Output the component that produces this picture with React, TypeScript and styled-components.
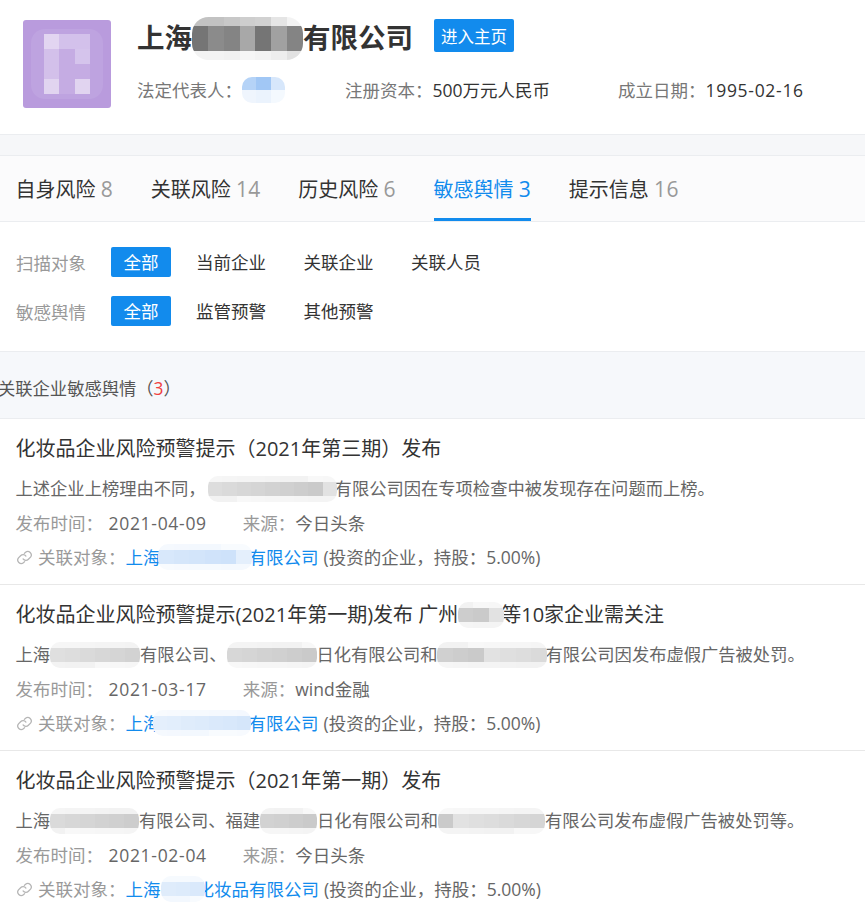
import React from "react";
import styled, { createGlobalStyle } from "styled-components";

const Global = createGlobalStyle`
  html, body { margin: 0; padding: 0; background: #fff; }
  body { font-family: "Open Sans", "Noto Sans CJK SC", sans-serif; color: #333; overflow: hidden; }
`;

const Page = styled.div`
  width: 865px;
  height: 922px;
  overflow: hidden;
  background: #fff;
`;

const Header = styled.header`
  display: flex;
  padding: 20px 0 0 23px;
  height: 114px;
  border-bottom: 1px solid #ebedf0;
`;

const Avatar = styled.div`
  width: 88px;
  height: 88px;
  border-radius: 3px;
  flex: none;
  overflow: hidden;
  svg { display: block; }
`;

const HeadInfo = styled.div`
  margin-left: 26px;
  display: flex;
  flex-direction: column;
`;

const TitleRow = styled.div`
  display: flex;
  align-items: flex-start;
`;

const CompanyName = styled.h1`
  margin: 0;
  height: 36px;
  font-size: 27.5px;
  line-height: 36px;
  font-weight: 700;
  color: #333;
  display: flex;
  align-items: center;
`;

const HomeButton = styled.button`
  margin: -1px 0 0 21px;
  width: 80px;
  height: 33px;
  border: 0;
  padding: 0;
  border-radius: 2px;
  background: #128bed;
  color: #fff;
  font: 16.5px "Noto Sans CJK SC", sans-serif;
`;

const MetaRow = styled.div`
  display: flex;
  margin-top: 21px;
  font-size: 17.5px;
  line-height: 24px;
`;

const MetaCell = styled.div<{ $w: number }>`
  width: ${(p) => p.$w}px;
  display: flex;
  align-items: center;
  white-space: nowrap;
`;

const MetaLabel = styled.span`
  color: #777;
`;

const Wide = styled.span`
  letter-spacing: 0.7px;
`;

const Gap = styled.div`
  height: 20px;
  background: #f6f7f9;
`;

const Tabs = styled.nav`
  height: 65px;
  display: flex;
  padding-left: 15.5px;
  gap: 37.6px;
  background: #fbfbfc;
  border-top: 1px solid #ebedf0;
  border-bottom: 1px solid #ebedf0;
`;

const Tab = styled.div<{ $active?: boolean }>`
  height: 65px;
  line-height: 67px;
  font-size: 20px;
  white-space: nowrap;
  color: ${(p) => (p.$active ? "#128bed" : "#333")};
  box-shadow: ${(p) => (p.$active ? "inset 0 -3px 0 #128bed" : "none")};
`;

const TabCount = styled.span<{ $active?: boolean }>`
  font-size: 21px;
  letter-spacing: 0.4px;
  color: ${(p) => (p.$active ? "#128bed" : "#999")};
`;

const Filters = styled.section`
  height: 129px;
  padding: 25px 0 0 16px;
  box-sizing: border-box;
  display: flex;
  flex-direction: column;
  gap: 19px;
`;

const FilterRow = styled.div`
  display: flex;
  align-items: center;
  height: 30px;
`;

const FilterLabel = styled.span`
  width: 95px;
  font-size: 17.5px;
  color: #999;
`;

const Chips = styled.div`
  display: flex;
  gap: 12.5px;
`;

const Chip = styled.span<{ $active?: boolean }>`
  height: 30px;
  line-height: 30px;
  padding: 0 12.5px;
  border-radius: 2px;
  font-size: 17.5px;
  background: ${(p) => (p.$active ? "#128bed" : "transparent")};
  color: ${(p) => (p.$active ? "#fff" : "#333")};
`;

const SectionHead = styled.div`
  height: 66px;
  line-height: 74px;
  border-top: 1px solid #ebedf0;
  border-bottom: 1px solid #ebedf0;
  background: #f6f8fb;
  font-size: 17.3px;
  color: #555;
  white-space: nowrap;
`;

const SectionText = styled.span`
  display: inline-block;
  transform: translateX(-2px);
`;

const Red = styled.span`
  color: #f04040;
`;

const Item = styled.article`
  height: 165px;
  padding-left: 15.5px;
  border-bottom: 1px solid #e8e8e8;
  display: flex;
  flex-direction: column;
  white-space: nowrap;
  &:last-child { border-bottom: 0; }
`;

const ItemTitle = styled.h2`
  margin: 15px 0 0;
  font-size: 20px;
  line-height: 30px;
  font-weight: 400;
  color: #333;
  display: flex;
  align-items: center;
`;

const ItemDesc = styled.p`
  margin: 12px 0 0;
  font-size: 17.3px;
  line-height: 26px;
  color: #666;
  display: flex;
  align-items: center;
`;

const ItemMeta = styled.div`
  margin-top: 8px;
  font-size: 17.5px;
  line-height: 26px;
  color: #999;
  display: flex;
`;

const MetaValue = styled.span<{ $gap: number; $left: number }>`
  margin-left: ${(p) => p.$left}px;
  margin-right: ${(p) => p.$gap}px;
  color: #666;
`;

const ItemLink = styled.div`
  margin-top: 8px;
  font-size: 17.5px;
  line-height: 26px;
  color: #999;
  display: flex;
  align-items: center;
`;

const LinkIcon = styled.svg`
  width: 17px;
  height: 17px;
  margin-right: 5.5px;
  flex: none;
`;

const CompanyLink = styled.span`
  color: #128bed;
  display: flex;
  align-items: center;
`;

const LinkNote = styled.span`
  color: #666;
  margin-left: 5px;
`;

const MosaicBox = styled.span<{ $w: number; $h: number; $ml: number; $mr: number }>`
  display: inline-block;
  position: relative;
  flex: none;
  width: ${(p) => p.$w}px;
  height: ${(p) => p.$h}px;
  margin: 0 ${(p) => p.$mr}px 0 ${(p) => p.$ml}px;
  border-radius: ${(p) => p.$h / 2.6}px;
  overflow: hidden;
  filter: blur(0.5px);
  svg { display: block; }
`;

/* Pixelated privacy blur: a soft blob with a grid of tinted cells. */
function Mosaic({
  w,
  h = 26,
  rgb,
  levels,
  ml = 0,
  mr = 0,
}: {
  w: number;
  h?: number;
  rgb: number[];
  levels: number[][];
  ml?: number;
  mr?: number;
}) {
  const rows = levels.length;
  const mix = (v: number) =>
    `rgb(${rgb.map((c) => Math.round(255 - v * (255 - c))).join(",")})`;
  const edges = rows === 3 ? [0, Math.round(h * 0.22), Math.round(h * 0.78), h] : levels.map((_, r) => Math.round((r * h) / rows)).concat(h);
  return (
    <MosaicBox $w={w} $h={h} $ml={ml} $mr={mr}>
      <svg width={w} height={h} viewBox={`0 0 ${w} ${h}`} shapeRendering="crispEdges">
        {levels.map((row, r) =>
          row.map((v, c) => {
            const x0 = Math.round((c * w) / row.length);
            const x1 = Math.round(((c + 1) * w) / row.length);
            return (
              <rect
                key={`${r}-${c}`}
                x={x0}
                y={edges[r]}
                width={x1 - x0}
                height={edges[r + 1] - edges[r]}
                fill={mix(v)}
              />
            );
          })
        )}
      </svg>
    </MosaicBox>
  );
}

const GREY = [110, 110, 110];
const BLUE = [120, 175, 240];
const soft = (n: number, seed: number) =>
  Array.from({ length: n }, (_, i) => 0.2 + (((i * 7 + seed) * 13) % 10) / 55);
const band = (n: number, s: number) => [
  soft(n, s).map((v) => v * 0.25),
  soft(n, s + 3),
  soft(n, s + 5).map((v) => v * 0.25),
];

const LinkGlyph = () => (
  <LinkIcon viewBox="0 0 24 24" fill="none" stroke="#b5b5b5" strokeWidth="1.8" strokeLinecap="round">
    <path d="M10 14a5 5 0 0 0 7.5.5l3-3a5 5 0 0 0-7-7l-1.7 1.7" />
    <path d="M14 10a5 5 0 0 0-7.5-.5l-3 3a5 5 0 0 0 7 7l1.7-1.7" />
  </LinkIcon>
);

type Seg = string | { w: number; seed: number; n?: number; ml?: number; mr?: number };

const Segs = ({ parts, rgb = GREY, h = 26 }: { parts: Seg[]; rgb?: number[]; h?: number }) => (
  <>
    {parts.map((p, i) =>
      typeof p === "string" ? (
        <span key={i}>{p}</span>
      ) : (
        <Mosaic
          key={i}
          w={p.w}
          h={h}
          rgb={rgb}
          ml={p.ml}
          mr={p.mr}
          levels={band(p.n ?? Math.round(p.w / 15), p.seed)}
        />
      )
    )}
  </>
);

const items: {
  title: Seg[];
  desc: Seg[];
  date: string;
  source: string;
  link: Seg[];
}[] = [
  {
    title: ["化妆品企业风险预警提示（2021年第三期）发布"],
    desc: ["上述企业上榜理由不同，", { w: 129, seed: 1, ml: 2, mr: -2 }, "有限公司因在专项检查中被发现存在问题而上榜。"],
    date: "2021-04-09",
    source: "今日头条",
    link: ["上海", { w: 94, seed: 2, ml: -3, mr: -3 }, "有限公司"],
  },
  {
    title: ["化妆品企业风险预警提示(2021年第一期)发布 广州", { w: 46, seed: 3, mr: -3 }, "等10家企业需关注"],
    desc: ["上海", { w: 90, seed: 4 }, "有限公司、", { w: 90, seed: 5 }, "日化有限公司和", { w: 110, seed: 6, mr: -2 }, "有限公司因发布虚假广告被处罚。"],
    date: "2021-03-17",
    source: "wind金融",
    link: ["上海", { w: 98, seed: 7, ml: -8, mr: -2 }, "有限公司"],
  },
  {
    title: ["化妆品企业风险预警提示（2021年第一期）发布"],
    desc: ["上海", { w: 89, seed: 8 }, "有限公司、福建", { w: 57, seed: 9 }, "日化有限公司和", { w: 107, seed: 10 }, "有限公司发布虚假广告被处罚等。"],
    date: "2021-02-04",
    source: "今日头条",
    link: ["上海", { w: 44, seed: 11, mr: -8 }, "化妆品有限公司"],
  },
];

const tabs: [string, number][] = [
  ["自身风险", 8],
  ["关联风险", 14],
  ["历史风险", 6],
  ["敏感舆情", 3],
  ["提示信息", 16],
];

export default function App() {
  return (
    <Page>
      <Global />
      <Header>
        <Avatar>
          <svg width="88" height="88" viewBox="0 0 88 88">
            <rect width="88" height="88" fill="#b99bdd" />
            <rect x="8" y="9" width="72" height="70" rx="14" fill="#bea3e0" />
            <rect x="21" y="14" width="46" height="60" fill="#c5ace3" />
            <rect x="21" y="14" width="15" height="15" fill="#e2d5f1" />
            <rect x="36" y="14" width="31" height="15" fill="#d3c1eb" />
            <rect x="21" y="29" width="15" height="30" fill="#d3c0ea" />
            <rect x="52" y="29" width="15" height="15" fill="#d5c4ec" />
            <rect x="21" y="59" width="15" height="15" fill="#e1d4f0" />
            <rect x="52" y="59" width="15" height="15" fill="#e1d4f0" />
          </svg>
        </Avatar>
        <HeadInfo>
          <TitleRow>
            <CompanyName>
              上海
              <Mosaic w={111} h={43} rgb={GREY} levels={[
                [0.42, 0.42, 0.38, 0.34, 0.32, 0.18, 0.08],
                [0.95, 0.8, 0.85, 0.6, 0.95, 0.65, 0.85],
                [0.08, 0.08, 0.1, 0.06, 0.08, 0.12, 0.2],
              ]} />
              有限公司
            </CompanyName>
            <HomeButton>进入主页</HomeButton>
          </TitleRow>
          <MetaRow>
            <MetaCell $w={208}>
              <MetaLabel>法定代表人：</MetaLabel>
              <Mosaic w={43} h={26} rgb={BLUE} levels={[[0.55, 0.7, 0.3], [0.12, 0.15, 0.08]]} />
            </MetaCell>
            <MetaCell $w={273}>
              <MetaLabel>注册资本：</MetaLabel>500万元人民币
            </MetaCell>
            <MetaCell $w={200}>
              <MetaLabel>成立日期：</MetaLabel>
              <Wide>1995-02-16</Wide>
            </MetaCell>
          </MetaRow>
        </HeadInfo>
      </Header>
      <Gap />
      <Tabs>
        {tabs.map(([name, n], i) => (
          <Tab key={name} $active={i === 3}>
            {name} <TabCount $active={i === 3}>{n}</TabCount>
          </Tab>
        ))}
      </Tabs>
      <Filters>
        <FilterRow>
          <FilterLabel>扫描对象</FilterLabel>
          <Chips>
            <Chip $active>全部</Chip>
            <Chip>当前企业</Chip>
            <Chip>关联企业</Chip>
            <Chip>关联人员</Chip>
          </Chips>
        </FilterRow>
        <FilterRow>
          <FilterLabel>敏感舆情</FilterLabel>
          <Chips>
            <Chip $active>全部</Chip>
            <Chip>监管预警</Chip>
            <Chip>其他预警</Chip>
          </Chips>
        </FilterRow>
      </Filters>
      <SectionHead>
        <SectionText>
          关联企业敏感舆情（<Red>3</Red>）
        </SectionText>
      </SectionHead>
      {items.map((it) => (
        <Item key={it.date}>
          <ItemTitle>
            <Segs parts={it.title} />
          </ItemTitle>
          <ItemDesc>
            <Segs parts={it.desc} />
          </ItemDesc>
          <ItemMeta>
            发布时间：
            <MetaValue $left={5.5} $gap={36}>
              <Wide>{it.date}</Wide>
            </MetaValue>
            来源：
            <MetaValue $left={0} $gap={0}>{it.source}</MetaValue>
          </ItemMeta>
          <ItemLink>
            <LinkGlyph />
            关联对象：
            <CompanyLink>
              <Segs parts={it.link} rgb={BLUE} />
            </CompanyLink>
            <LinkNote>(投资的企业，持股：5.00%)</LinkNote>
          </ItemLink>
        </Item>
      ))}
    </Page>
  );
}
